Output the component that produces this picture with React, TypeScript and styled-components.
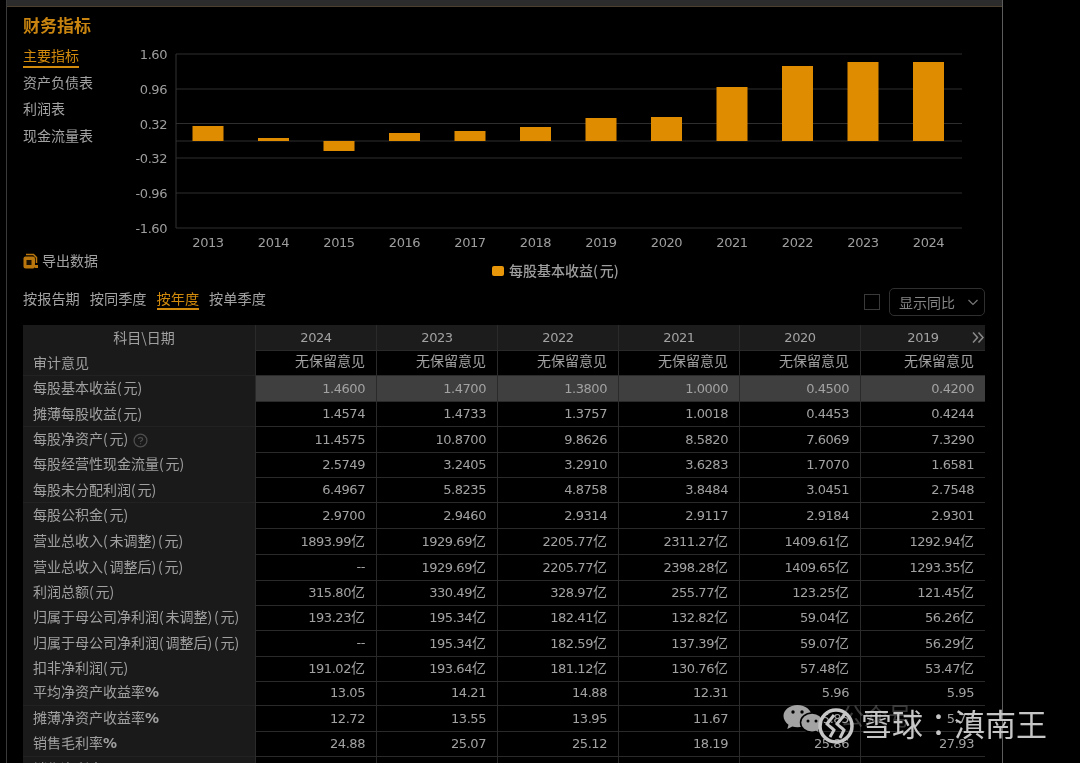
import React from "react";
import styled, { createGlobalStyle } from "styled-components";

const Global = createGlobalStyle`
  html, body { margin: 0; padding: 0; background: #000; }
  body { font-family: "Noto Sans CJK SC", "Liberation Sans", sans-serif; }
`;

const Page = styled.div`
  position: relative;
  width: 1080px;
  height: 763px;
  overflow: hidden;
  background: #000;
  color: #a2a2a2;
  filter: blur(0.45px);
`;
const Panel = styled.div`
  margin-left: 6px;
  width: 997px;
  height: 763px;
  box-sizing: border-box;
  border-left: 1px solid #3a3a3a;
  border-right: 1px solid #5c5c5c;
`;
const TopBar = styled.div`
  height: 6px;
  background: #2c2c2c;
  border-bottom: 1px solid #4d4030;
`;
const Body = styled.div`
  padding: 0 17px 0 16px;
`;
const Title = styled.h2`
  margin: 0;
  height: 37px;
  padding-top: 6px;
  box-sizing: border-box;
  font-size: 17px;
  line-height: 24px;
  font-weight: 700;
  color: #c98510;
`;
const TopRow = styled.div`
  display: flex;
  height: 240px;
`;
const Side = styled.div`
  width: 97px;
  display: flex;
  flex-direction: column;
  justify-content: space-between;
  padding: 1px 0 14px;
  box-sizing: border-box;
`;
const Nav = styled.div`
  display: flex;
  flex-direction: column;
  align-items: flex-start;
  gap: 5.500px;
`;
const NavItem = styled.span<{ $active?: boolean }>`
  font-size: 14px;
  line-height: 20px;
  height: 21px;
  border-bottom: ${(p) => (p.$active ? "2px solid #d18a0c" : "0")};
  margin-bottom: ${(p) => (p.$active ? "-2px" : "0")};
  color: ${(p) => (p.$active ? "#d18a0c" : "#a2a2a2")};
`;
const Export = styled.div`
  display: flex;
  align-items: center;
  gap: 4px;
  font-size: 14px;
  line-height: 20px;
`;
const ChartWrap = styled.div`
  flex: none;
`;
const TabsRow = styled.div`
  display: flex;
  align-items: center;
  justify-content: space-between;
  height: 41px;
`;
const Tabs = styled.div`
  display: flex;
  gap: 10px;
  margin-top: -12px;
`;
const Tab = styled.span<{ $active?: boolean }>`
  font-size: 14.200px;
  line-height: 20px;
  height: 20px;
  border-bottom: 2px solid ${(p) => (p.$active ? "#d18a0c" : "transparent")};
  color: ${(p) => (p.$active ? "#d18a0c" : "#a2a2a2")};
`;
const Tools = styled.div`
  display: flex;
  align-items: center;
  gap: 9px;
  margin-top: -5px;
`;
const Check = styled.span`
  width: 14px;
  height: 14px;
  border: 1px solid #3a3a3a;
  display: block;
`;
const Select = styled.div`
  width: 96px;
  height: 28px;
  box-sizing: border-box;
  border: 1px solid #2f2f2f;
  border-radius: 5px;
  display: flex;
  align-items: center;
  justify-content: space-between;
  padding: 0 5px 0 9px;
  font-size: 14px;
  color: #858585;
`;
const Table = styled.div`
  width: 962px;
`;
const Row = styled.div<{ $head?: boolean; $hl?: boolean }>`
  display: grid;
  grid-template-columns: 232px repeat(5, 121px) 125px;
  height: 25.4px;
  box-sizing: border-box;
  background: ${(p) => (p.$head ? "#1c1c1c" : p.$hl ? "#3f3f3f" : "transparent")};
`;
const LabelCell = styled.div<{ $head?: boolean }>`
  background: #1a1a1a;
  border-bottom: 1px solid #222;
  padding: 0 0 2px 10px;
  box-sizing: border-box;
  font-size: 14px;
  line-height: 22px;
  white-space: nowrap;
  color: #a0a0a0;
  display: flex;
  align-items: center;
  justify-content: ${(p) => (p.$head ? "center" : "flex-start")};
`;
const Paren = styled.span`
  letter-spacing: 1.750px;
`;
const Percent = styled.span`
  font-family: "DejaVu Sans", sans-serif;
  font-weight: 700;
  font-size: 14px;
`;
const HelpWrap = styled.span`
  display: flex;
  margin: 4px 0 0 3px;
`;
const Cell = styled.div<{ $cjk?: boolean }>`
  border-left: 1px solid #2a2a2a;
  border-bottom: 1px solid #2a2a2a;
  padding-right: 11px;
  box-sizing: border-box;
  text-align: right;
  font-family: "DejaVu Sans", "Noto Sans CJK SC", sans-serif;
  font-size: ${(p) => (p.$cjk ? "14px" : "13px")};
  line-height: ${(p) => (p.$cjk ? "23px" : "25px")};
  letter-spacing: ${(p) => (p.$cjk ? "0" : "-0.45px")};
  white-space: nowrap;
  color: #a2a2a2;
`;
const HeadCell = styled(Cell)`
  position: relative;
  text-align: center;
  padding-right: 0;
  line-height: 25px;
`;
const More = styled.span`
  position: absolute;
  right: 0;
  top: 6px;
  display: flex;
`;
const Unit = styled.span`
  font-family: "Noto Sans CJK SC", sans-serif;
  font-size: 14px;
  letter-spacing: 0;
`;
const Watermark = styled.div`
  position: absolute;
  left: 783px;
  top: 700px;
  width: 280px;
  height: 44px;
`;
const Faint = styled.span`
  position: absolute;
  left: 57px;
  top: 1px;
  font-size: 24px;
  line-height: 28px;
  color: rgba(190, 190, 190, 0.3);
  white-space: nowrap;
`;
const Mark = styled.span`
  position: absolute;
  left: 78px;
  top: 3px;
  font-family: "Noto Sans CJK TC", sans-serif;
  font-size: 31px;
  line-height: 40px;
  color: #c6c6c6;
  white-space: nowrap;
`;

const YEARS = [2013, 2014, 2015, 2016, 2017, 2018, 2019, 2020, 2021, 2022, 2023, 2024];
const TOPS = [126, 138, 151, 133, 131, 127, 118, 117, 87, 66, 62, 62];
const TICKS: [string, number][] = [
  ["1.60", 54], ["0.96", 89], ["0.32", 123.5], ["-0.32", 158], ["-0.96", 193], ["-1.60", 228],
];
const ZERO = 141;
const OY = 44;
const OX = 120;

const Chart = () => (
  <svg width="850" height="240" viewBox={`${OX} ${OY} 850 240`} style={{ display: "block" }}>
    {TICKS.map(([t, y]) => (
      <g key={t}>
        <line x1="176" x2="962" y1={y} y2={y} stroke="#2e2e2e" strokeWidth="1" />
        <text x="167" y={y + 5} textAnchor="end" fontFamily="DejaVu Sans" fontSize="13" letterSpacing="-0.45" fill="#9e9e9e">{t}</text>
      </g>
    ))}
    <line x1="176" x2="962" y1={ZERO} y2={ZERO} stroke="#2e2e2e" />
    <line x1="176" x2="176" y1="54" y2="228" stroke="#333" />
    {YEARS.map((y, i) => {
      const cx = 208 + i * 65.5;
      const t = TOPS[i];
      const top = Math.min(t, ZERO);
      const h = Math.abs(t - ZERO);
      return (
        <g key={y}>
          <rect x={cx - 15.5} y={top} width="31" height={h} fill="#e08c00" />
          <text x={cx} y="247" textAnchor="middle" fontFamily="DejaVu Sans" fontSize="13" letterSpacing="-0.45" fill="#9e9e9e">{y}</text>
        </g>
      );
    })}
    <rect x="492" y="266" width="12" height="10" rx="2" fill="#e8960a" />
    <text x="509" y="276" fontFamily="Noto Sans CJK SC" fontSize="14" fontWeight="500" fill="#9e9e9e">
      每股基本收益<tspan letterSpacing="1.75">(</tspan>元<tspan letterSpacing="1.75">)</tspan>
    </text>
  </svg>
);

const ExportIcon = () => (
  <svg width="15" height="16" viewBox="0 0 15 16" style={{ marginTop: 1 }}>
    <path d="M3 1.500h7.500L13.500 4.500V10" fill="none" stroke="#b8760c" strokeWidth="1.500" />
    <rect x="0.500" y="3.500" width="11.500" height="12" rx="2" fill="#b8760c" />
    <rect x="3.500" y="7" width="5" height="5" fill="#1c1203" />
    <rect x="12" y="12" width="3" height="3" fill="#b8760c" />
  </svg>
);
const Help = () => (
  <svg width="15" height="15" viewBox="0 0 14 14">
    <circle cx="7" cy="7" r="6" fill="none" stroke="#4e4e4e" strokeWidth="1.200" />
    <path d="M5 5.500c.3-1.600 4-1.600 4 .3 0 1.300-2 1.300-2 2.600M7 9.600v1" fill="none" stroke="#4e4e4e" strokeWidth="1.100" />
  </svg>
);
const Chevron = () => (
  <svg width="12" height="12" viewBox="0 0 12 12">
    <path d="M1.500 4l4.500 4.500L10.500 4" fill="none" stroke="#777" strokeWidth="1.200" />
  </svg>
);
const DoubleRight = () => (
  <svg width="13" height="13" viewBox="0 0 13 13">
    <path d="M1 1.500l4.500 5-4.500 5M6.500 1.500l4.500 5-4.500 5" fill="none" stroke="#8a8a8a" strokeWidth="1.500" />
  </svg>
);
const WeChat = () => (
  <svg width="44" height="38" viewBox="0 0 44 38" style={{ position: "absolute", left: 0, top: 4 }}>
    <path d="M14.500 1C6.500 1 .5 6 .5 12c0 3.600 2 6.500 5 8.700L4.300 25l5-2.500c1.700.5 3.300.8 5.200.8 8 0 14-5.300 14-11.300C28.500 6 22.500 1 14.500 1z" fill="#a3a3a3" />
    <path d="M29 9c-6.500 0-11.500 4.300-11.500 9.600S22.500 28.200 29 28.200c1.400 0 2.800-.3 4-.7l3.700 2.100-.9-3.500c2.700-1.800 4.300-4.500 4.300-7.500C40.100 13.300 35.500 9 29 9z" fill="#a3a3a3" stroke="#000" strokeWidth="1.500" />
    <circle cx="10" cy="8" r="1.700" fill="#000" />
    <circle cx="19" cy="8" r="1.700" fill="#000" />
    <circle cx="25" cy="17" r="1.500" fill="#000" />
    <circle cx="33" cy="17" r="1.500" fill="#000" />
  </svg>
);
const Xueqiu = () => (
  <svg width="38" height="38" viewBox="0 0 38 38" style={{ position: "absolute", left: 34, top: 8 }}>
    <circle cx="19" cy="18" r="16" fill="none" stroke="#c6c6c6" strokeWidth="3.500" />
    <path d="M17 7L10 16c2 2 5 4 7 6l-4 7" fill="none" stroke="#c6c6c6" strokeWidth="3" />
    <path d="M28 6L20 16c2 2 5 4 7 6l-4 8" fill="none" stroke="#c6c6c6" strokeWidth="3" />
  </svg>
);

type RowData = { label: string; values: string[]; help?: boolean; hl?: boolean };
const yi = (a: string[]) => a.map((v) => (v === "--" ? v : v + "亿"));
const ROWS: RowData[] = [
  { label: "审计意见", values: Array(6).fill("无保留意见") },
  { label: "每股基本收益(元)", values: ["1.4600", "1.4700", "1.3800", "1.0000", "0.4500", "0.4200"], hl: true },
  { label: "摊薄每股收益(元)", values: ["1.4574", "1.4733", "1.3757", "1.0018", "0.4453", "0.4244"] },
  { label: "每股净资产(元)", values: ["11.4575", "10.8700", "9.8626", "8.5820", "7.6069", "7.3290"], help: true },
  { label: "每股经营性现金流量(元)", values: ["2.5749", "3.2405", "3.2910", "3.6283", "1.7070", "1.6581"] },
  { label: "每股未分配利润(元)", values: ["6.4967", "5.8235", "4.8758", "3.8484", "3.0451", "2.7548"] },
  { label: "每股公积金(元)", values: ["2.9700", "2.9460", "2.9314", "2.9117", "2.9184", "2.9301"] },
  { label: "营业总收入(未调整)(元)", values: yi(["1893.99", "1929.69", "2205.77", "2311.27", "1409.61", "1292.94"]) },
  { label: "营业总收入(调整后)(元)", values: yi(["--", "1929.69", "2205.77", "2398.28", "1409.65", "1293.35"]) },
  { label: "利润总额(元)", values: yi(["315.80", "330.49", "328.97", "255.77", "123.25", "121.45"]) },
  { label: "归属于母公司净利润(未调整)(元)", values: yi(["193.23", "195.34", "182.41", "132.82", "59.04", "56.26"]) },
  { label: "归属于母公司净利润(调整后)(元)", values: yi(["--", "195.34", "182.59", "137.39", "59.07", "56.29"]) },
  { label: "扣非净利润(元)", values: yi(["191.02", "193.64", "181.12", "130.76", "57.48", "53.47"]) },
  { label: "平均净资产收益率%", values: ["13.05", "14.21", "14.88", "12.31", "5.96", "5.95"] },
  { label: "摊薄净资产收益率%", values: ["12.72", "13.55", "13.95", "11.67", "5.85", "5.73"] },
  { label: "销售毛利率%", values: ["24.88", "25.07", "25.12", "18.19", "25.86", "27.93"] },
  { label: "销售净利率%", values: Array(6).fill("") },
];
const HEAD = [2024, 2023, 2022, 2021, 2020, 2019];

const Value = ({ v }: { v: string }) =>
  v.endsWith("亿") ? (
    <>
      {v.slice(0, -1)}
      <Unit>亿</Unit>
    </>
  ) : (
    <>{v}</>
  );

const Label = ({ text }: { text: string }) => (
  <span>
    {text.split(/([()%])/).map((part, i) =>
      part === "(" || part === ")" ? (
        <Paren key={i}>{part}</Paren>
      ) : part === "%" ? (
        <Percent key={i}>%</Percent>
      ) : (
        part
      )
    )}
  </span>
);

export default function App() {
  return (
    <Page>
      <Global />
      <Panel>
        <TopBar />
        <Body>
          <Title>财务指标</Title>
          <TopRow>
            <Side>
              <Nav>
                <NavItem $active>主要指标</NavItem>
                <NavItem>资产负债表</NavItem>
                <NavItem>利润表</NavItem>
                <NavItem>现金流量表</NavItem>
              </Nav>
              <Export>
                <ExportIcon />
                导出数据
              </Export>
            </Side>
            <ChartWrap>
              <Chart />
            </ChartWrap>
          </TopRow>
          <TabsRow>
            <Tabs>
              <Tab>按报告期</Tab>
              <Tab>按同季度</Tab>
              <Tab $active>按年度</Tab>
              <Tab>按单季度</Tab>
            </Tabs>
            <Tools>
              <Check />
              <Select>
                显示同比
                <Chevron />
              </Select>
            </Tools>
          </TabsRow>
          <Table>
            <Row $head>
              <LabelCell $head>科目\日期</LabelCell>
              {HEAD.map((y, i) => (
                <HeadCell key={y}>
                  {y}
                  {i === 5 && (
                    <More>
                      <DoubleRight />
                    </More>
                  )}
                </HeadCell>
              ))}
            </Row>
            {ROWS.map((r) => (
              <Row key={r.label} $hl={r.hl}>
                <LabelCell>
                  <Label text={r.label} />
                  {r.help && (
                    <HelpWrap>
                      <Help />
                    </HelpWrap>
                  )}
                </LabelCell>
                {r.values.map((v, i) => (
                  <Cell key={i} $cjk={v === "无保留意见"}>
                    <Value v={v} />
                  </Cell>
                ))}
              </Row>
            ))}
          </Table>
        </Body>
      </Panel>
      <Watermark>
        <Faint>公众号</Faint>
        <WeChat />
        <Xueqiu />
        <Mark>雪球：滇南王</Mark>
      </Watermark>
    </Page>
  );
}
